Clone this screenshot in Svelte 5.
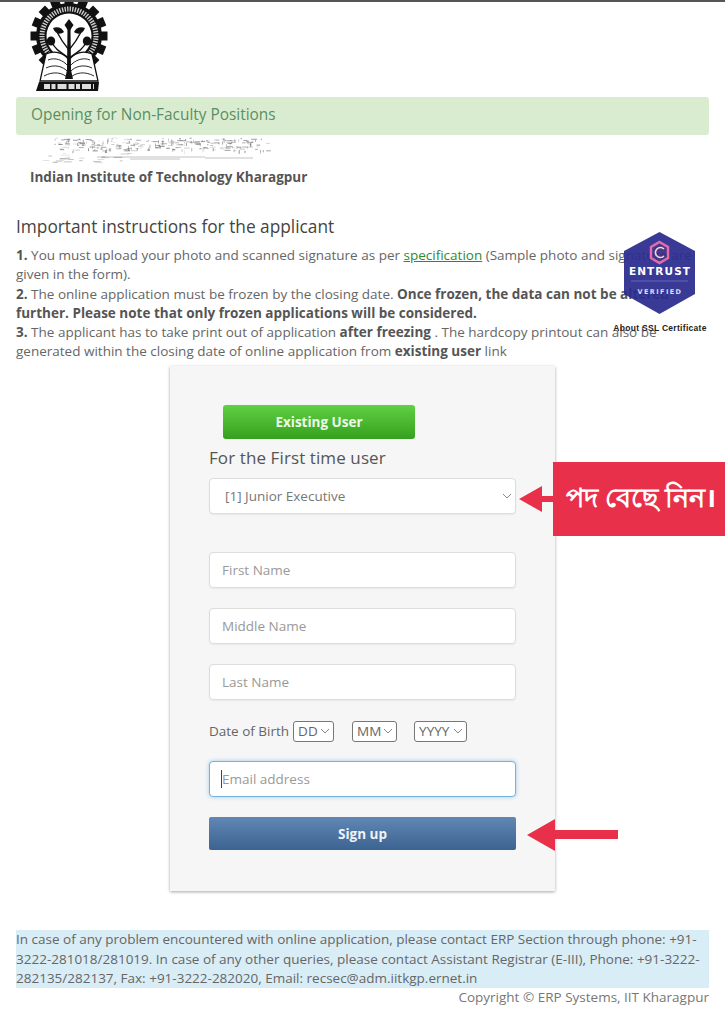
<script>
	// seeded strokes for the faded, illegible title image under the alert
	function scribble() {
		let seed = 11;
		const rnd = () => (seed = (seed * 16807) % 2147483647) / 2147483647;
		const out = [];
		for (let i = 0; i < 260; i++) {
			const x = 20 + rnd() * 212;
			const y = 1 + rnd() * 13;
			const tick = rnd() < 0.35;
			out.push({ x, y, dx: tick ? 0 : 1 + rnd() * 5, dy: tick ? 1 + rnd() * 3 : 0, o: 0.15 + rnd() * 0.6 });
		}
		for (let i = 0; i < 24; i++) {
			out.push({ x: 5 + rnd() * 90, y: 16 + rnd() * 10, dx: 2 + rnd() * 8, dy: 0, o: 0.15 + rnd() * 0.35 });
		}
		return out;
	}
	const strokes = scribble();

	const teeth = Array.from({ length: 16 }, (_, i) => (i * 360) / 16);
	const positions = ['[1] Junior Executive'];
</script>

<div class="page">
	<header class="logo">
		<svg width="80" height="93" viewBox="0 0 80 93">
			<g transform="translate(0 -2)">
				<g fill="#111">
					{#each teeth as a}
						<rect x="36.5" y="-2.5" width="9" height="8" transform="rotate({a} 41 36)" />
					{/each}
				</g>
				<circle cx="41" cy="36" r="33" fill="#111" />
				<circle cx="41" cy="36" r="27" fill="none" stroke="#ccc" stroke-width="5" stroke-dasharray="1.4 1.2" />
				<circle cx="41" cy="36" r="22.5" fill="#fff" />
				<path d="M18 54 C27 50 36 53 41 60 C46 53 55 50 64 54 L70 81 L12 81 Z" fill="#fff" stroke="#111" stroke-width="1.3" />
				<path d="M16 76 C25 71 35 72 41 79 C47 72 57 71 66 76 M18 68 C26 64 35 66 40 72 M64 68 C56 64 47 66 42 72 M20 60 C27 57 35 60 40 66 M62 60 C55 57 47 60 42 66" fill="none" stroke="#111" stroke-width="0.9" />
				<path d="M39.5 28 L42.5 28 L43 70 L45 79 L37 79 L39 70 Z" fill="#111" />
				<g fill="none" stroke="#111" stroke-width="1.4">
					<path d="M41 58 C34 53 27 50 24 42" />
					<path d="M41 58 C48 53 55 50 58 42" />
					<path d="M41 50 C36 44 32 38 29 32" />
					<path d="M41 50 C46 44 50 38 53 32" />
				</g>
				<g fill="#111">
					<path d="M41 19 L45.5 25 L41 32 L36.5 25 Z" />
					<path d="M25 28 C30 26 34 28 36 32 C32 35 27 34 25 28 Z" />
					<path d="M57 28 C52 26 48 28 46 32 C50 35 55 34 57 28 Z" />
					<ellipse cx="23" cy="41" rx="4.2" ry="4.6" />
					<ellipse cx="59" cy="41" rx="4.2" ry="4.6" />
				</g>
				<path d="M11 82 L71 82 L70 91 L8 91 Z" fill="#111" />
				<path d="M16 86.5 L66 86.5" stroke="#ddd" stroke-width="5" stroke-dasharray="6 1.5 4 2 9 2" />
			</g>
		</svg>
	</header>

	<div class="alert">Opening for Non-Faculty Positions</div>

	<svg class="title-scan" width="240" height="29" viewBox="0 0 240 29">
		<g stroke="#555" stroke-width="0.9">
			{#each strokes as s}
				<line x1={s.x} y1={s.y} x2={s.x + s.dx} y2={s.y + s.dy} opacity={s.o} />
			{/each}
			<path d="M62 20 H170 M95 22 H145 M170 21 H218" opacity="0.4" />
		</g>
	</svg>

	<p class="institute">Indian Institute of Technology Kharagpur</p>

	<h2>Important instructions for the applicant</h2>

	<div class="notes">
		<strong>1.</strong> You must upload your photo and scanned signature as per
		<a href="#spec">specification</a> (Sample photo and signature are given in the form).<br />
		<strong>2.</strong> The online application must be frozen by the closing date.
		<strong>Once frozen, the data can not be altered further. Please note that only frozen applications will be considered.</strong><br />
		<strong>3.</strong> The applicant has to take print out of application <strong>after freezing</strong> . The hardcopy printout can also be generated within the closing date of online application from <strong>existing user</strong> link

		<div class="seal">
			<svg width="73" height="84" viewBox="0 0 73 84">
				<path d="M36.5 1 L72 20 L72 63 L36.5 83 L1 63 L1 20 Z" fill="#2b2c8f" />
				<path d="M36.5 11 L45 16 L45 27 L36.5 32 L28 27 L28 16 Z" fill="#3a2a80" stroke="#e063a8" stroke-width="2.4" />
				<path d="M41 18 A5 5 0 1 0 41 25" fill="none" stroke="#f4d9ea" stroke-width="1.6" />
				<line x1="8" y1="50" x2="65" y2="50" stroke="#6f6fc0" stroke-width="0.7" />
			</svg>
			<span class="seal-name">ENTRUST</span>
			<span class="seal-state">VERIFIED</span>
			<span class="seal-about">About SSL Certificate</span>
		</div>
	</div>

	<form class="card">
		<button type="button" class="btn-existing">Existing User</button>
		<h3>For the First time user</h3>
		<select class="field position">
			{#each positions as p}
				<option>{p}</option>
			{/each}
		</select>

		<input class="field name" placeholder="First Name" />
		<input class="field name" placeholder="Middle Name" />
		<input class="field name" placeholder="Last Name" />

		<div class="dob">
			<span>Date of Birth</span>
			<select class="dd"><option>DD</option></select>
			<select class="mm"><option>MM</option></select>
			<select class="yy"><option>YYYY</option></select>
		</div>

		<div class="email-wrap">
			<input class="field email" placeholder="Email address" />
			<i class="caret"></i>
		</div>

		<button type="button" class="btn-signup">Sign up</button>
	</form>

	<div class="help">
		In case of any problem encountered with online application, please contact ERP Section through phone: +91-3222-281018/281019. In case of any other queries, please contact Assistant Registrar (E-III), Phone: +91-3222-282135/282137, Fax: +91-3222-282020, Email: recsec@adm.iitkgp.ernet.in
	</div>
	<div class="copyright">Copyright © ERP Systems, IIT Kharagpur</div>

	<div class="callout">
		<svg width="34" height="26" viewBox="0 0 34 26"><path d="M0 13 L23 0 L23 10 L34 10 L34 16 L23 16 L23 26 Z" fill="#e8304a" /></svg>
		<div class="callout-box" lang="bn">পদ বেছে নিন।</div>
	</div>

	<svg class="arrow-signup" width="92" height="34" viewBox="0 0 92 34">
		<path d="M0 17 L28 1 L28 12 L91 12 L91 21 L28 21 L28 33 Z" fill="#e8304a" />
	</svg>
</div>

<style>
	:global(body) {
		margin: 0;
		background: #fff;
	}

	.page {
		position: relative;
		box-sizing: border-box;
		width: 725px;
		height: 1024px;
		padding: 0 16px;
		border-top: 2px solid #555;
		overflow: hidden;
		font-family: "Open Sans", "Noto Sans", sans-serif;
		font-size: 13.5px;
		line-height: 19.2px;
		color: #666;
	}

	.logo {
		height: 95px;
		padding-left: 12px;
	}

	.logo svg {
		display: block;
	}

	.alert {
		height: 38px;
		padding-left: 15px;
		border-radius: 3px;
		background: #daecd0;
		color: #5a8f62;
		font-size: 15.4px;
		line-height: 36px;
	}

	.title-scan {
		display: block;
		margin: 2px 0 0 19px;
		filter: blur(0.6px);
	}

	.institute {
		margin: 2px 0 0 14px;
		font-size: 13.5px;
		font-weight: 700;
		color: #555;
	}

	h2 {
		margin: 28px 0 0;
		font-size: 17.3px;
		font-weight: 400;
		line-height: 24px;
		color: #444;
	}

	.notes {
		position: relative;
		margin-top: 7px;
	}

	.notes strong {
		color: #555;
	}

	.notes a {
		color: #2f8a2f;
	}

	.seal {
		position: absolute;
		top: -15px;
		left: 596px;
		width: 100px;
		height: 104px;
		color: #fff;
		text-align: center;
		font-weight: 700;
	}

	.seal svg {
		position: absolute;
		left: 11px;
		top: 0;
		opacity: 0.93;
	}

	.seal-name,
	.seal-state,
	.seal-about {
		position: absolute;
		left: 0;
		width: 96px;
		white-space: nowrap;
	}

	.seal-name {
		top: 31px;
		left: 0;
		font-family: "DejaVu Sans", sans-serif;
		font-size: 10.5px;
		letter-spacing: 1.1px;
	}

	.seal-state {
		top: 52px;
		left: 0;
		font-family: "DejaVu Sans", sans-serif;
		font-size: 6.5px;
		letter-spacing: 1.4px;
		color: #dcdcf0;
	}

	.seal-about {
		top: 88px;
		font-family: "Liberation Sans", sans-serif;
		font-size: 8.5px;
		letter-spacing: 0.3px;
		color: #222;
	}

	.card {
		box-sizing: border-box;
		display: flex;
		flex-direction: column;
		align-items: flex-start;
		width: 385px;
		height: 525px;
		margin: 5px 0 0 154px;
		padding: 39px 39px 0;
		background: #f6f6f6;
		box-shadow: 0 1px 3px rgba(0, 0, 0, 0.35);
	}

	.btn-existing {
		width: 192px;
		height: 34px;
		margin-left: 14px;
		border: 0;
		border-radius: 3px;
		background: linear-gradient(#60d044, #35a01e);
		color: #eef9e8;
		font: 700 13.5px "Open Sans", sans-serif;
	}

	h3 {
		margin: 7px 0 8px;
		font-size: 17px;
		font-weight: 400;
		line-height: 24px;
		letter-spacing: 0.1px;
		color: #555;
	}

	.field {
		box-sizing: border-box;
		width: 307px;
		height: 36px;
		padding: 0 12px;
		border: 1px solid #ddd;
		border-radius: 4px;
		background-color: #fff;
		color: #777;
		font: 13.5px "Open Sans", sans-serif;
		box-shadow: 0 1px 2px rgba(0, 0, 0, 0.06);
	}

	.field::placeholder {
		color: #999;
	}

	select {
		appearance: none;
		background-image: url("data:image/svg+xml,%3Csvg xmlns='http://www.w3.org/2000/svg' width='10' height='6'%3E%3Cpath d='M1 1l4 4 4-4' fill='none' stroke='%23888' stroke-width='1'/%3E%3C/svg%3E");
		background-repeat: no-repeat;
		background-position: right 3px center;
	}

	.position {
		padding-left: 15px;
	}

	.name {
		margin-bottom: 20px;
	}

	.position + .name {
		margin-top: 38px;
	}

	.dob {
		display: flex;
		align-items: center;
		height: 24px;
		margin: -1px 0 18px;
		color: #666;
	}

	.dob select {
		box-sizing: border-box;
		height: 21px;
		padding: 0 0 0 4px;
		border: 1px solid #777;
		border-radius: 3px;
		background-color: #fff;
		color: #666;
		font: 13.5px "Open Sans", sans-serif;
	}

	.dd {
		width: 41px;
		margin-left: 4px;
	}

	.mm {
		width: 45px;
		margin-left: 18px;
	}

	.yy {
		width: 53px;
		margin-left: 17px;
	}

	.email-wrap {
		position: relative;
		width: 307px;
		height: 36px;
		margin-bottom: 20px;
	}

	.email {
		display: block;
		height: 36px;
		border: 1px solid #74b3dc;
		outline: 0;
		box-shadow: 0 0 4px rgba(102, 175, 233, 0.6);
	}

	.caret {
		position: absolute;
		left: 12px;
		top: 9px;
		width: 1px;
		height: 18px;
		background: #444;
	}

	.btn-signup {
		width: 307px;
		height: 33px;
		border: 0;
		border-radius: 2px;
		background: linear-gradient(#6187b4, #3c6391);
		color: #eef3f8;
		font: 700 13.5px "Open Sans", sans-serif;
	}

	.help {
		margin-top: 39px;
		background: #d9edf7;
		color: #666;
	}

	.copyright {
		text-align: right;
		color: #777;
	}

	.callout {
		position: absolute;
		top: 460px;
		left: 519px;
		display: flex;
		align-items: center;
	}

	.callout-box {
		box-sizing: border-box;
		width: 172px;
		height: 74px;
		padding-left: 13px;
		background: #e8304a;
		color: #fff;
		font-family: "Noto Sans", sans-serif;
		font-size: 27px;
		font-weight: 700;
		line-height: 70px;
		white-space: nowrap;
	}

	.arrow-signup {
		position: absolute;
		top: 816px;
		left: 527px;
	}
</style>
